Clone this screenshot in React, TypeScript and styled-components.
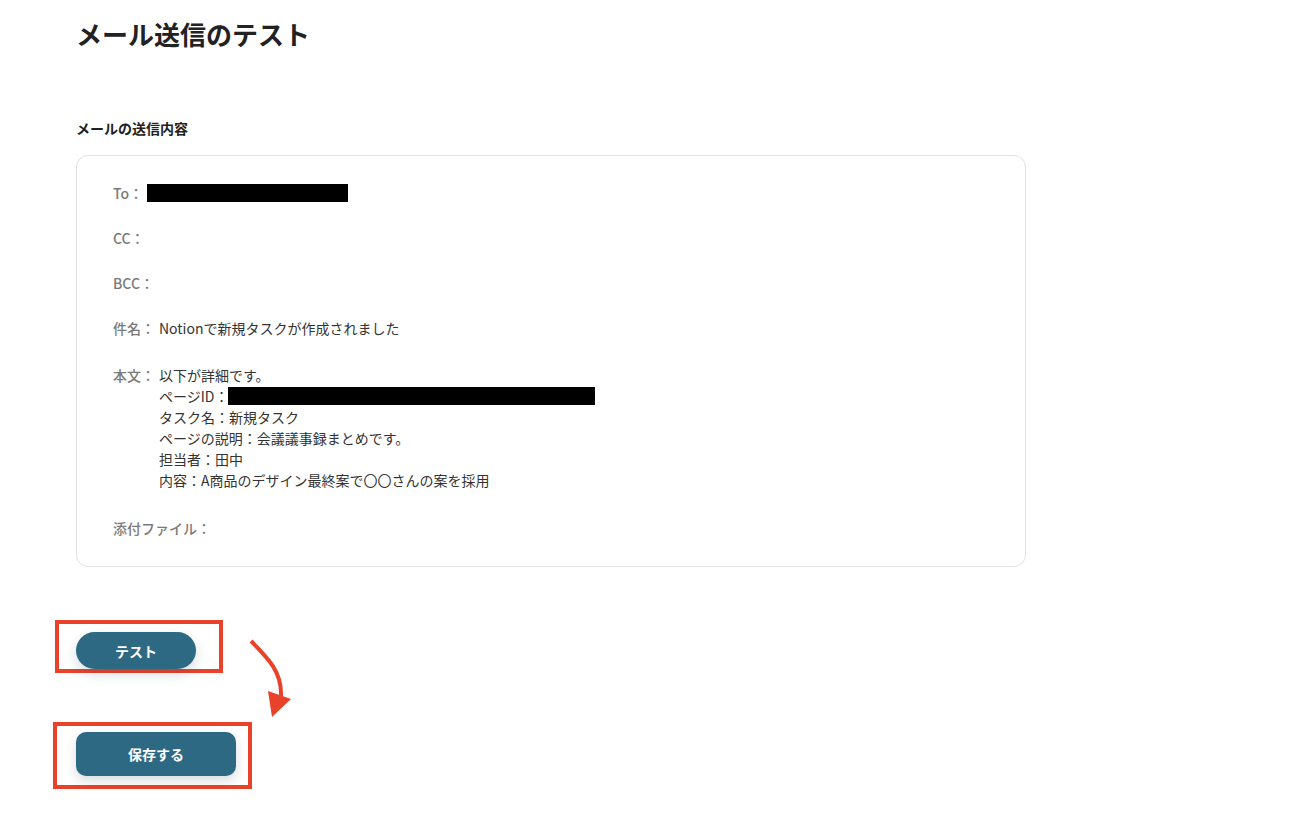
import React from "react";
import styled, { createGlobalStyle } from "styled-components";

const GlobalStyle = createGlobalStyle`
  html, body {
    margin: 0;
    padding: 0;
    background: #ffffff;
  }
  body {
    font-family: "Noto Sans CJK JP", "Noto Sans", "Liberation Sans", sans-serif;
    color: #333333;
  }
`;

const Page = styled.div`
  position: relative;
  width: 1296px;
  height: 824px;
  box-sizing: border-box;
  padding: 14px 0 0 76px;
`;

const Title = styled.h1`
  margin: 0;
  font-size: 26px;
  line-height: 39px;
  font-weight: 700;
  color: #222222;
`;

const SectionLabel = styled.h2`
  margin: 65px 0 0;
  font-size: 14px;
  line-height: 21px;
  font-weight: 700;
  color: #222222;
`;

const Card = styled.div`
  margin-top: 16px;
  width: 950px;
  box-sizing: border-box;
  border: 1px solid #e2e2e2;
  border-radius: 12px;
  padding: 27px 36px 27px;
  display: flex;
  flex-direction: column;
  gap: 24px;
`;

const Row = styled.div<{ $spaced?: boolean }>`
  display: flex;
  align-items: flex-start;
  gap: 4px;
  font-size: 14px;
  line-height: 21px;
  ${(p) => (p.$spaced ? "padding: 2px 0 3px;" : "")}
`;

const Label = styled.span`
  flex: none;
  color: #7a7a7a;
  font-weight: 500;
  white-space: nowrap;
`;

const Value = styled.div`
  color: #333333;
  white-space: pre-line;
`;

const Redacted = styled.span<{ $w: number }>`
  display: inline-block;
  vertical-align: top;
  margin-top: 1px;
  height: 18px;
  width: ${(p) => p.$w}px;
  background: #000000;
`;

const Actions = styled.div`
  margin-top: 53px;
  margin-left: -21px;
  display: flex;
  flex-direction: column;
  align-items: flex-start;
  gap: 49px;
`;

const Highlight = styled.div<{ $pad: string; $shift?: number }>`
  display: inline-flex;
  border: 4px solid #e8432a;
  padding: ${(p) => p.$pad};
  margin-left: ${(p) => p.$shift ?? 0}px;
`;

const Button = styled.button<{ $w: number; $h: number; $r: number }>`
  width: ${(p) => p.$w}px;
  height: ${(p) => p.$h}px;
  border: none;
  border-radius: ${(p) => p.$r}px;
  background: #2e6983;
  color: #ffffff;
  font-family: "Noto Sans CJK JP", "Noto Sans", sans-serif;
  font-size: 14px;
  font-weight: 700;
  box-shadow: 0 5px 12px rgba(40, 60, 80, 0.18);
  cursor: pointer;
`;

const Arrow = styled.svg`
  position: absolute;
  left: 240px;
  top: 630px;
`;

export default function App() {
  return (
    <>
      <GlobalStyle />
      <Page>
        <Title>メール送信のテスト</Title>
        <SectionLabel>メールの送信内容</SectionLabel>
        <Card>
          <Row>
            <Label>To：</Label>
            <Value>
              <Redacted $w={201} />
            </Value>
          </Row>
          <Row>
            <Label>CC：</Label>
          </Row>
          <Row>
            <Label>BCC：</Label>
          </Row>
          <Row>
            <Label>件名：</Label>
            <Value>Notionで新規タスクが作成されました</Value>
          </Row>
          <Row $spaced>
            <Label>本文：</Label>
            <Value>
              以下が詳細です。
              {"\n"}
              ページID：<Redacted $w={367} />
              {"\n"}
              タスク名：新規タスク
              {"\n"}
              ページの説明：会議議事録まとめです。
              {"\n"}
              担当者：田中
              {"\n"}
              内容：A商品のデザイン最終案で〇〇さんの案を採用
            </Value>
          </Row>
          <Row>
            <Label>添付ファイル：</Label>
          </Row>
        </Card>
        <Actions>
          <Highlight $pad="8px 23px 0 17px">
            <Button $w={120} $h={37} $r={19}>
              テスト
            </Button>
          </Highlight>
          <Highlight $pad="6px 12px 9px 19px" $shift={-2}>
            <Button $w={160} $h={44} $r={10}>
              保存する
            </Button>
          </Highlight>
        </Actions>
        <Arrow width="60" height="95" viewBox="0 0 60 95">
          <path
            d="M11 11 C 28 28, 42 42, 41 66"
            fill="none"
            stroke="#e8432a"
            strokeWidth="4"
          />
          <polygon points="28,61 51,69 32,87" fill="#e8432a" />
        </Arrow>
      </Page>
    </>
  );
}
